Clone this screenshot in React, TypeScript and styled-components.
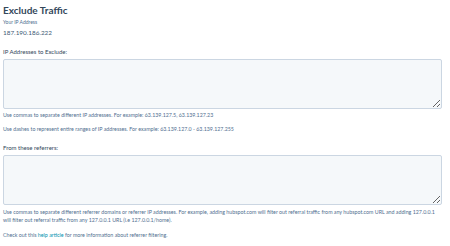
import React from "react";
import styled, { createGlobalStyle } from "styled-components";

const GlobalStyle = createGlobalStyle`
  html, body {
    margin: 0;
    padding: 0;
    background: #ffffff;
  }
  body {
    font-family: "Lato", "Open Sans", sans-serif;
    color: #33475b;
  }
`;

const Page = styled.div`
  width: 450px;
  box-sizing: border-box;
  padding: 3px 8px 0 3px;
`;

const Title = styled.h1`
  margin: 0;
  font-size: 10px;
  line-height: 14px;
  font-weight: 700;
  color: #33475b;
`;

const SmallLabel = styled.div`
  margin-top: 1px;
  font-size: 5px;
  line-height: 8px;
  color: #516f90;
`;

const IpValue = styled.div`
  margin-top: 2px;
  font-size: 6.4px;
  line-height: 10px;
  font-weight: 400;
  color: #425b76;
`;

const FieldLabel = styled.label<{ $top: number }>`
  display: block;
  margin-top: ${(p) => p.$top}px;
  font-size: 6px;
  line-height: 9px;
  font-weight: 400;
  color: #33475b;
`;

const Area = styled.textarea`
  display: block;
  box-sizing: border-box;
  width: 100%;
  height: 50px;
  margin: 3px 0 0;
  background: #f5f8fa;
  border: 1px solid #cbd6e2;
  border-radius: 2px;
  resize: vertical;
  font: inherit;
`;

const Help = styled.p<{ $top: number }>`
  margin: ${(p) => p.$top}px 0 0;
  font-size: 5.3px;
  line-height: 8px;
  color: #516f90;
`;

const Link = styled.a`
  color: #0091ae;
  text-decoration: none;
`;

export default function App() {
  return (
    <>
      <GlobalStyle />
      <Page>
        <Title>Exclude Traffic</Title>
        <SmallLabel>Your IP Address</SmallLabel>
        <IpValue>187.190.186.222</IpValue>

        <FieldLabel $top={9}>IP Addresses to Exclude:</FieldLabel>
        <Area />
        <Help $top={2}>
          Use commas to separate different IP addresses. For example: 63.139.127.5, 63.139.127.23
        </Help>
        <Help $top={6}>
          Use dashes to represent entire ranges of IP addresses. For example: 63.139.127.0 - 63.139.127.255
        </Help>

        <FieldLabel $top={10}>From these referrers:</FieldLabel>
        <Area />
        <Help $top={3}>
          Use commas to separate different referrer domains or referrer IP addresses. For example, adding
          hubspot.com will filter out referral traffic from any hubspot.com URL and adding 127.0.0.1 will filter
          out referral traffic from any 127.0.0.1 URL (i.e 127.0.0.1/home).
        </Help>
        <Help $top={7}>
          Check out this <Link href="#">help article</Link> for more information about referrer filtering.
        </Help>
      </Page>
    </>
  );
}
